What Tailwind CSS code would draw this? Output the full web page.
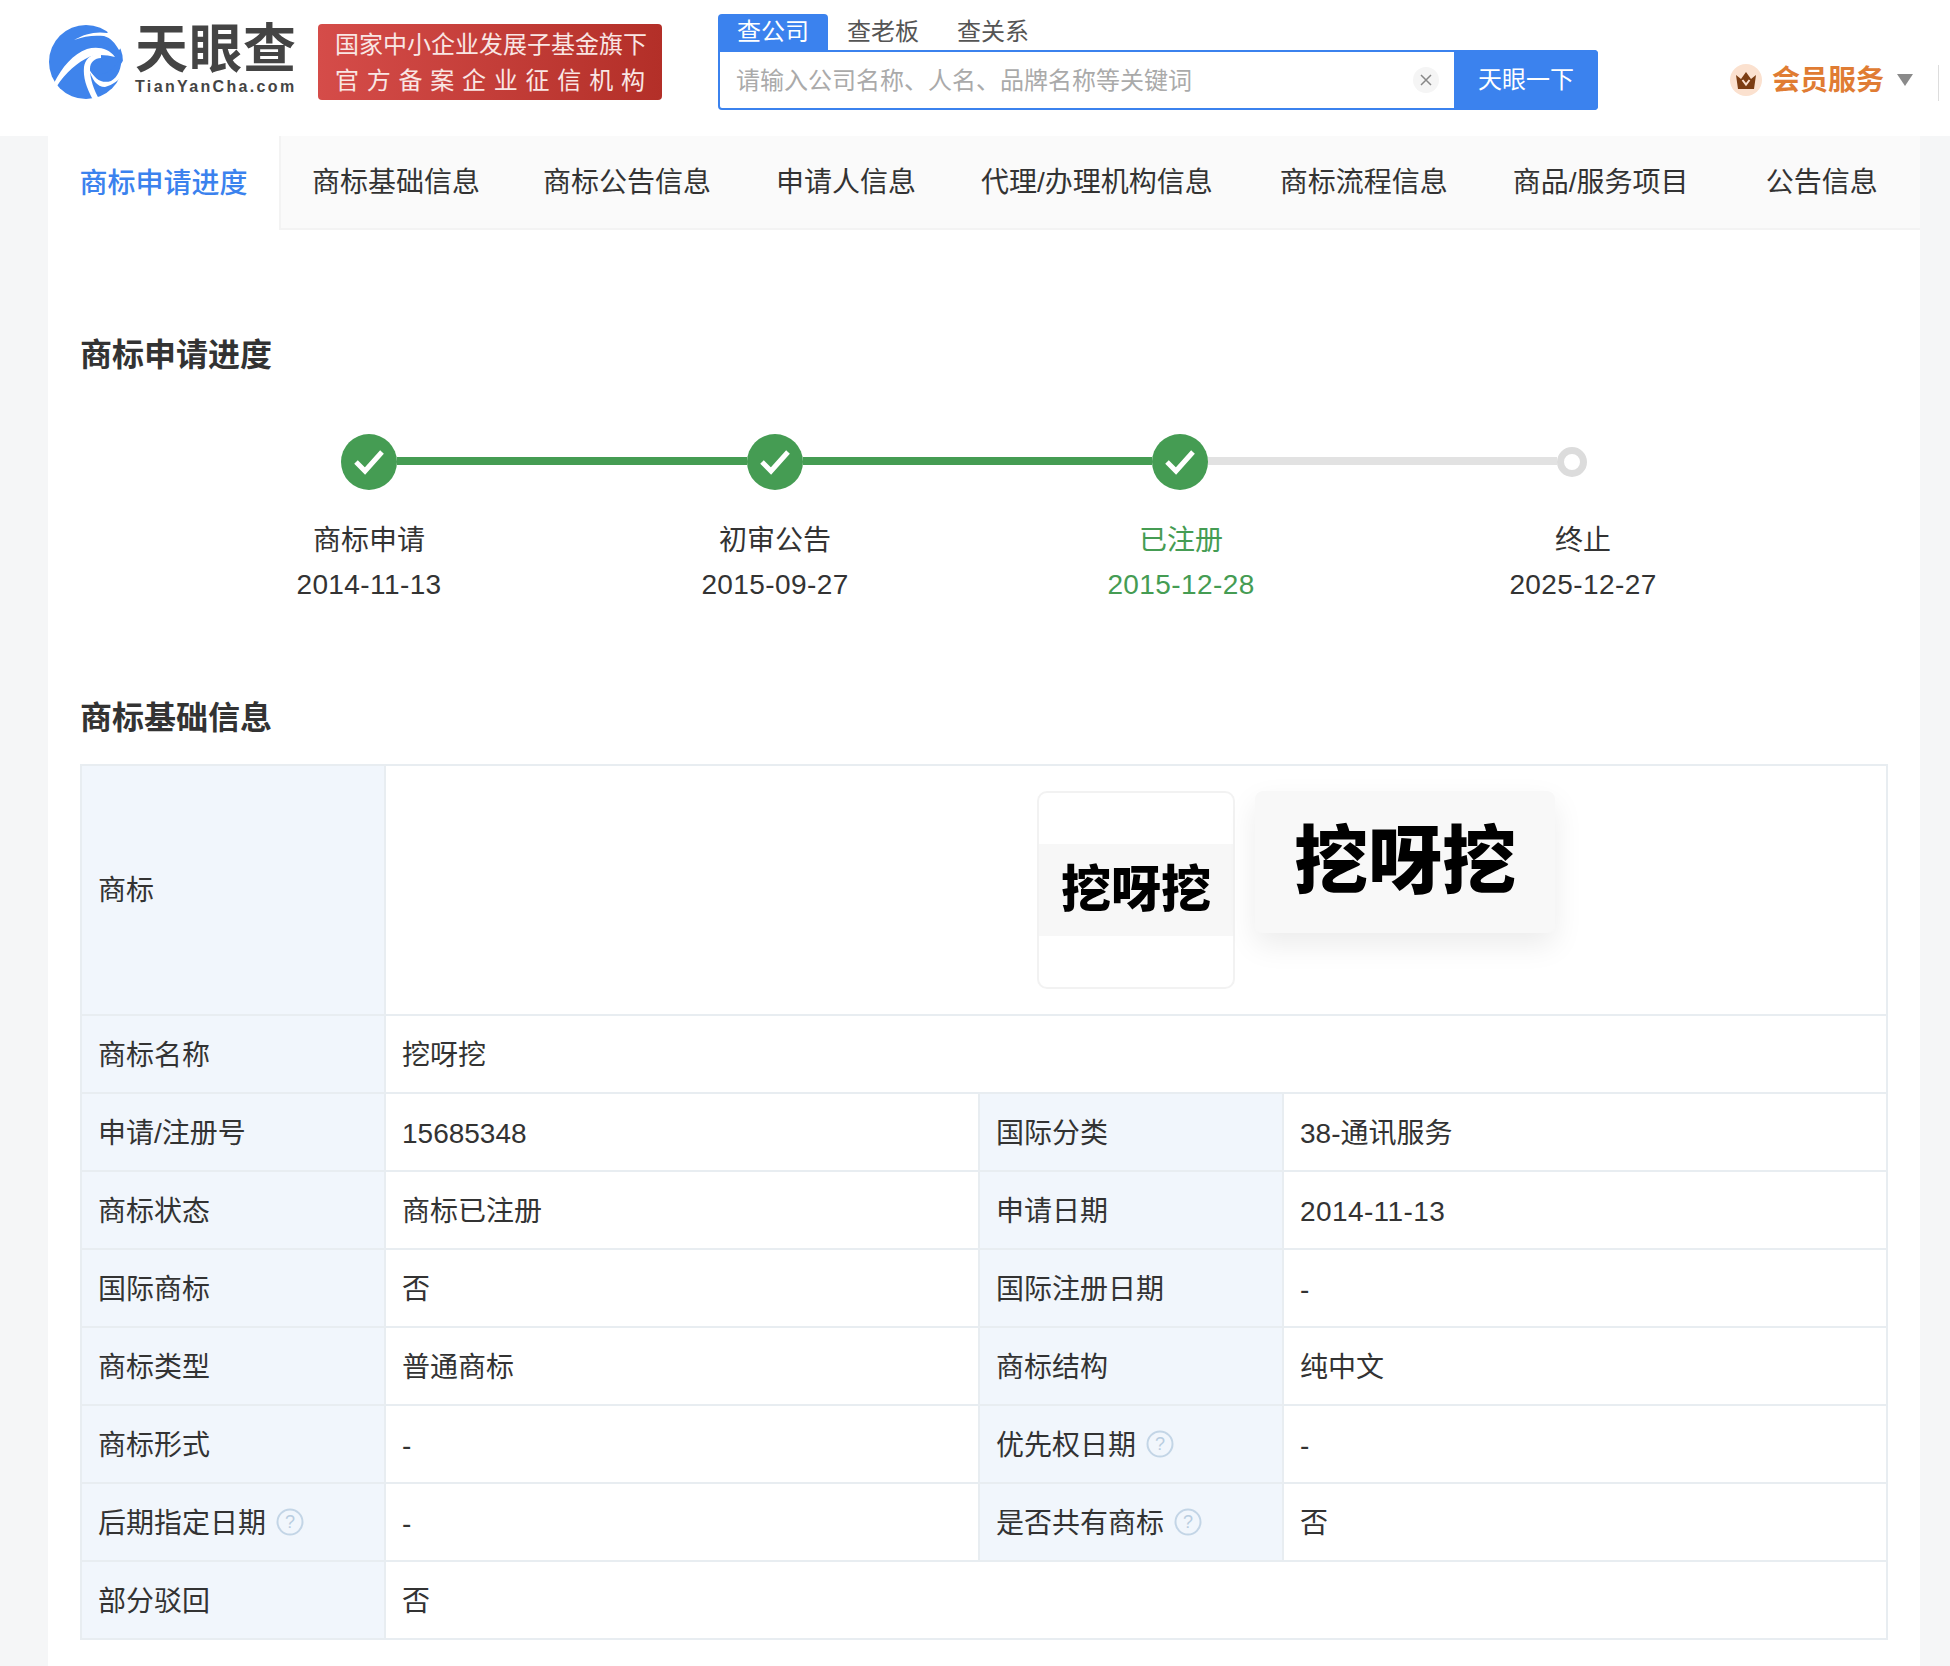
<!DOCTYPE html>
<html lang="zh-CN">
<head>
<meta charset="UTF-8">
<title>商标详情 - 天眼查</title>
<script src="https://cdn.jsdelivr.net/npm/@tailwindcss/browser@4"></script>
</head>
<body class="bg-[#f5f6f7] w-[1950px] h-[1666px] overflow-hidden text-[#333] font-['Liberation_Sans','Noto_Sans_CJK_SC',sans-serif]">

  <!-- top bar -->
  <header class="relative h-[136px] bg-white flex items-start">
    <a class="flex items-start ml-[49px] mt-[24px] w-[269px]">
      <svg class="w-[75px] h-[75px] shrink-0 mt-[1px]" viewBox="0 0 75 75">
        <circle cx="37" cy="37" r="37" fill="#3f84ec"/>
        <!-- white cuts of the swirl -->
        <path fill="#fff" d="M25 15C35 9 47 6 58 8L64 3L75 3L75 20L70 25C66 18 62 13 55 11C45 10 35 11 25 15Z"/>
        <path fill="#fff" d="M5 58C13 42 24 29 38 24C48 21 60 23 66 32C58 30 47 29 40 32C29 37 16 48 8 61Z"/>
        <path fill="#fff" d="M44 75C37 62 34 52 35 42C36 34 42 28 52 29L52 33C46 33 41 37 41 44C41 54 45 65 50 74Z"/>
        <path fill="#fff" d="M39 42C43 52 52 55 62 50C67 47 71 41 75 34L75 49C70 55 64 60 56 62C48 62 43 55 39 42Z"/>
        <path fill="#3f84ec" d="M41 44C45 50 53 51 60 46C65 42 68 38 72 33C73 43 69 52 62 56C53 59 45 54 41 44Z"/>
      </svg>
      <div class="ml-[11px] flex flex-col items-start">
        <span class="text-[53px] leading-[50px] font-bold text-[#444] tracking-[1px] mt-[1px]">天眼查</span>
        <span class="text-[16px] leading-[20px] font-bold text-[#444] tracking-[2.35px] mt-[2px]">TianYanCha.com</span>
      </div>
    </a>
    <div class="w-[344px] h-[76px] mt-[24px] rounded-[4px] bg-gradient-to-r from-[#d54c49] to-[#b32f28] text-[#f9e6e4] text-[24px] leading-[36px] px-[17px] pt-[3px] shrink-0">
      <div class="flex justify-between"><span>国</span><span>家</span><span>中</span><span>小</span><span>企</span><span>业</span><span>发</span><span>展</span><span>子</span><span>基</span><span>金</span><span>旗</span><span>下</span></div>
      <div class="flex justify-between"><span>官</span><span>方</span><span>备</span><span>案</span><span>企</span><span>业</span><span>征</span><span>信</span><span>机</span><span>构</span></div>
    </div>
    <div class="ml-[56px] mt-[14px] w-[880px] shrink-0">
      <div class="flex h-[36px] text-[24px] leading-[36px] text-[#555]">
        <span class="w-[110px] text-center bg-[#3b82ee] text-white rounded-t-[4px]">查公司</span>
        <span class="ml-[19px]">查老板</span>
        <span class="ml-[38px]">查关系</span>
      </div>
      <div class="flex h-[60px] rounded-b-[4px] rounded-tr-[4px] border-2 border-[#3b82ee] bg-white">
        <div class="flex-1 flex items-center pl-[16px] pr-[15px] text-[24px] text-[#aaa]">
          <span class="flex-1 pt-[2px]">请输入公司名称、人名、品牌名称等关键词</span>
          <span class="w-[26px] h-[26px] rounded-full bg-[#f5f5f5] flex items-center justify-center">
            <svg class="w-[12px] h-[12px]" viewBox="0 0 12 12"><path d="M1 1L11 11M11 1L1 11" stroke="#888" stroke-width="1.5"/></svg>
          </span>
        </div>
        <div class="w-[144px] -my-[2px] -mr-[2px] bg-[#3b82ee] rounded-r-[4px] text-white text-[24px] flex items-center justify-center">天眼一下</div>
      </div>
    </div>
    <div class="ml-[132px] mt-[64px] flex items-center h-[32px] shrink-0">
      <span class="w-[32px] h-[32px] rounded-full bg-[#fbe1cf] flex items-center justify-center">
        <svg class="w-[20px] h-[17px]" viewBox="0 0 20 17"><path fill="#7c3d12" d="M0 3L5 7L10 0L15 7L20 3L18 17H2Z"/><path d="M6.5 8L10 12.5L13.5 8" fill="none" stroke="#fbe1cf" stroke-width="2"/></svg>
      </span>
      <span class="ml-[10px] pt-[2px] text-[28px] font-bold text-[#e07c33]">会员服务</span>
      <svg class="ml-[13px] w-[16px] h-[12px]" viewBox="0 0 16 12"><path fill="#8a8a8a" d="M0 0H16L8 12Z"/></svg>
    </div>
    <span class="absolute left-[1938px] top-[65px] h-[36px] w-[1px] bg-[#ddd]"></span>
  </header>

  <main class="mx-[48px] w-[1872px] h-[1530px] bg-white">
    <!-- tabs -->
    <nav class="h-[94px] flex items-center bg-[#fafafa] border-b-2 border-[#f3f3f3] text-[28px] leading-[40px] text-[#333] pt-[2px]">
      <a class="h-[94px] -mt-[2px] -mb-[2px] pt-[2px] w-[233px] bg-white border-r-2 border-[#f3f3f3] text-[#3b82ee] font-medium flex items-center justify-center">商标申请进度</a>
      <a class="ml-[31px]">商标基础信息</a>
      <a class="ml-[63px]">商标公告信息</a>
      <a class="ml-[65px]">申请人信息</a>
      <a class="ml-[65px]">代理/办理机构信息</a>
      <a class="ml-[67px]">商标流程信息</a>
      <a class="ml-[65px]">商品/服务项目</a>
      <a class="ml-[77px]">公告信息</a>
    </nav>

    <section class="px-[32px]">
      <h2 class="pt-[101px] text-[32px] leading-[48px] font-bold text-[#333]">商标申请进度</h2>

      <!-- progress -->
      <div class="mt-[54px] ml-[261px] flex items-center h-[58px]">
        <span class="w-[56px] h-[56px] rounded-full bg-[#459c53] flex items-center justify-center shrink-0">
          <svg class="w-[32px] h-[26px]" viewBox="0 0 32 26"><path d="M3 13L12 22L29 3" fill="none" stroke="#fff" stroke-width="5"/></svg>
        </span>
        <span class="w-[350px] h-[8px] mb-[2px] bg-[#459c53]"></span>
        <span class="w-[56px] h-[56px] rounded-full bg-[#459c53] flex items-center justify-center shrink-0">
          <svg class="w-[32px] h-[26px]" viewBox="0 0 32 26"><path d="M3 13L12 22L29 3" fill="none" stroke="#fff" stroke-width="5"/></svg>
        </span>
        <span class="w-[349px] h-[8px] mb-[2px] bg-[#459c53]"></span>
        <span class="w-[56px] h-[56px] rounded-full bg-[#459c53] flex items-center justify-center shrink-0">
          <svg class="w-[32px] h-[26px]" viewBox="0 0 32 26"><path d="M3 13L12 22L29 3" fill="none" stroke="#fff" stroke-width="5"/></svg>
        </span>
        <span class="w-[349px] h-[8px] mb-[2px] bg-[#e2e2e2]"></span>
        <span class="w-[30px] h-[30px] rounded-full border-[7px] border-[#dcdcdc] bg-white shrink-0"></span>
      </div>
      <div class="mt-[28px] ml-[126px] flex text-[28px] leading-[44px] text-center">
        <div class="w-[326px]">
          <p>商标申请</p>
          <p class="tracking-[0.4px]">2014-11-13</p>
        </div>
        <div class="w-[326px] ml-[80px]">
          <p>初审公告</p>
          <p class="tracking-[0.4px]">2015-09-27</p>
        </div>
        <div class="w-[326px] ml-[80px] text-[#459c53]">
          <p>已注册</p>
          <p class="tracking-[0.4px]">2015-12-28</p>
        </div>
        <div class="w-[326px] ml-[76px]">
          <p>终止</p>
          <p class="tracking-[0.4px]">2025-12-27</p>
        </div>
      </div>

      <h2 class="mt-[87px] text-[32px] leading-[48px] font-bold text-[#333]">商标基础信息</h2>

      <!-- info table -->
      <table class="mt-[22px] w-[1806px] table-fixed border-collapse text-[28px] leading-[40px] text-[#333]">
        <colgroup><col class="w-[304px]"><col class="w-[594px]"><col class="w-[304px]"><col class="w-[604px]"></colgroup>
        <tbody>
          <tr class="h-[250px]">
            <td class="border-2 border-[#e8edf1] bg-[#f1f6fc] px-[16px] pt-[2px]">商标</td>
            <td colspan="3" class="border-2 border-[#e8edf1] pl-[651px] align-top pt-[25px]">
              <div class="flex items-start gap-[20px]">
                <div class="w-[198px] h-[198px] rounded-[10px] border-2 border-[#f2f2f2] bg-white flex items-center overflow-hidden shrink-0">
                  <div class="w-full h-[92px] bg-[#f7f7f7] flex items-center justify-center text-[50px] leading-[60px] font-black text-black whitespace-nowrap blur-[0.5px]">挖呀挖</div>
                </div>
                <div class="w-[300px] h-[142px] rounded-[8px] bg-[#f8f8f8] shadow-[0_12px_30px_rgba(0,0,0,0.08)] text-center text-[74px] leading-[142px] font-black text-black whitespace-nowrap blur-[0.5px]">挖呀挖</div>
              </div>
            </td>
          </tr>
          <tr class="h-[78px]">
            <td class="border-2 border-[#e8edf1] bg-[#f1f6fc] px-[16px] pt-[4px]">商标名称</td>
            <td colspan="3" class="border-2 border-[#e8edf1] px-[16px] pt-[4px]">挖呀挖</td>
          </tr>
          <tr class="h-[78px]">
            <td class="border-2 border-[#e8edf1] bg-[#f1f6fc] px-[16px] pt-[4px]">申请/注册号</td>
            <td class="border-2 border-[#e8edf1] px-[16px] pt-[4px]">15685348</td>
            <td class="border-2 border-[#e8edf1] bg-[#f1f6fc] px-[16px] pt-[4px]">国际分类</td>
            <td class="border-2 border-[#e8edf1] px-[16px] pt-[4px]">38-通讯服务</td>
          </tr>
          <tr class="h-[78px]">
            <td class="border-2 border-[#e8edf1] bg-[#f1f6fc] px-[16px] pt-[4px]">商标状态</td>
            <td class="border-2 border-[#e8edf1] px-[16px] pt-[4px]">商标已注册</td>
            <td class="border-2 border-[#e8edf1] bg-[#f1f6fc] px-[16px] pt-[4px]">申请日期</td>
            <td class="border-2 border-[#e8edf1] px-[16px] pt-[4px] tracking-[0.4px]">2014-11-13</td>
          </tr>
          <tr class="h-[78px]">
            <td class="border-2 border-[#e8edf1] bg-[#f1f6fc] px-[16px] pt-[4px]">国际商标</td>
            <td class="border-2 border-[#e8edf1] px-[16px] pt-[4px]">否</td>
            <td class="border-2 border-[#e8edf1] bg-[#f1f6fc] px-[16px] pt-[4px]">国际注册日期</td>
            <td class="border-2 border-[#e8edf1] px-[16px] pt-[4px]">-</td>
          </tr>
          <tr class="h-[78px]">
            <td class="border-2 border-[#e8edf1] bg-[#f1f6fc] px-[16px] pt-[4px]">商标类型</td>
            <td class="border-2 border-[#e8edf1] px-[16px] pt-[4px]">普通商标</td>
            <td class="border-2 border-[#e8edf1] bg-[#f1f6fc] px-[16px] pt-[4px]">商标结构</td>
            <td class="border-2 border-[#e8edf1] px-[16px] pt-[4px]">纯中文</td>
          </tr>
          <tr class="h-[78px]">
            <td class="border-2 border-[#e8edf1] bg-[#f1f6fc] px-[16px] pt-[4px]">商标形式</td>
            <td class="border-2 border-[#e8edf1] px-[16px] pt-[4px]">-</td>
            <td class="border-2 border-[#e8edf1] bg-[#f1f6fc] px-[16px] pt-[4px]">
              <span class="flex items-center">优先权日期
                <svg class="ml-[10px] -mt-[4px] w-[28px] h-[28px]" viewBox="0 0 28 28"><circle cx="14" cy="14" r="12.5" fill="none" stroke="#c3d5e6" stroke-width="2"/><text x="14" y="20" text-anchor="middle" font-size="18" fill="#b9cde0">?</text></svg>
              </span>
            </td>
            <td class="border-2 border-[#e8edf1] px-[16px] pt-[4px]">-</td>
          </tr>
          <tr class="h-[78px]">
            <td class="border-2 border-[#e8edf1] bg-[#f1f6fc] px-[16px] pt-[4px]">
              <span class="flex items-center">后期指定日期
                <svg class="ml-[10px] -mt-[4px] w-[28px] h-[28px]" viewBox="0 0 28 28"><circle cx="14" cy="14" r="12.5" fill="none" stroke="#c3d5e6" stroke-width="2"/><text x="14" y="20" text-anchor="middle" font-size="18" fill="#b9cde0">?</text></svg>
              </span>
            </td>
            <td class="border-2 border-[#e8edf1] px-[16px] pt-[4px]">-</td>
            <td class="border-2 border-[#e8edf1] bg-[#f1f6fc] px-[16px] pt-[4px]">
              <span class="flex items-center">是否共有商标
                <svg class="ml-[10px] -mt-[4px] w-[28px] h-[28px]" viewBox="0 0 28 28"><circle cx="14" cy="14" r="12.5" fill="none" stroke="#c3d5e6" stroke-width="2"/><text x="14" y="20" text-anchor="middle" font-size="18" fill="#b9cde0">?</text></svg>
              </span>
            </td>
            <td class="border-2 border-[#e8edf1] px-[16px] pt-[4px]">否</td>
          </tr>
          <tr class="h-[78px]">
            <td class="border-2 border-[#e8edf1] bg-[#f1f6fc] px-[16px] pt-[4px]">部分驳回</td>
            <td colspan="3" class="border-2 border-[#e8edf1] px-[16px] pt-[4px]">否</td>
          </tr>
        </tbody>
      </table>
    </section>
  </main>
</body>
</html>
